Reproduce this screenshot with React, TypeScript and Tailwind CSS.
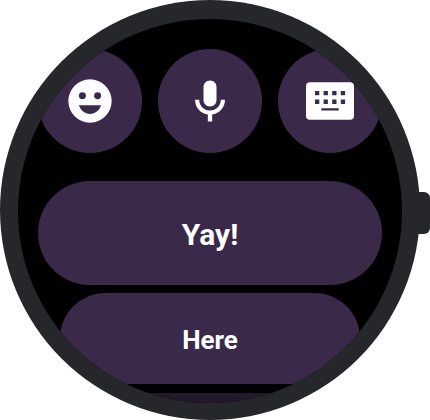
import type { ReactNode } from "react";

function SmileIcon() {
  return (
    <svg viewBox="0 0 24 24" className="size-13" fill="currentColor" aria-hidden="true">
      <path
        fillRule="evenodd"
        d="M12 2a10 10 0 1 0 0 20 10 10 0 0 0 0-20zM8.5 8a1.6 1.6 0 1 1 0 3.2 1.6 1.6 0 0 1 0-3.2zm7 0a1.6 1.6 0 1 1 0 3.2 1.6 1.6 0 0 1 0-3.2zM12 18c2.33 0 4.4-1.7 5.11-4H6.89c.71 2.3 2.78 4 5.11 4z"
      />
    </svg>
  );
}

function MicIcon() {
  return (
    <svg viewBox="0 0 24 24" className="size-13" fill="currentColor" aria-hidden="true">
      <path d="M12 14.5c1.66 0 3-1.34 3-3V5.5c0-1.66-1.34-3-3-3s-3 1.34-3 3v6c0 1.66 1.34 3 3 3z" />
      <path d="M17 11.4c0 2.76-2.24 5-5 5s-5-2.24-5-5H5.1c0 3.53 2.51 6.33 5.9 6.82v3.28h2v-3.28c3.39-.49 5.9-3.29 5.9-6.82H17z" />
    </svg>
  );
}

function KeyboardIcon() {
  return (
    <svg viewBox="0 0 52 52" className="size-13" fill="currentColor" aria-hidden="true">
      <path
        fillRule="evenodd"
        d="M6 7.3h40a4 4 0 0 1 4 4v29.4a4 4 0 0 1-4 4H6a4 4 0 0 1-4-4V11.3a4 4 0 0 1 4-4zM11 16v4.3h4.3V16zM19.6 16v4.3h4.3V16zM28.2 16v4.3h4.3V16zM36.8 16v4.3h4.3V16zM11 24.6v4.3h4.3v-4.3zM19.6 24.6v4.3h4.3v-4.3zM28.2 24.6v4.3h4.3v-4.3zM36.8 24.6v4.3h4.3v-4.3zM17.3 33.3v2.2h17.4v-2.2z"
      />
    </svg>
  );
}

function RoundButton({ label, children }: { label: string; children: ReactNode }) {
  return (
    <button
      type="button"
      aria-label={label}
      className="flex aspect-square flex-1 items-center justify-center rounded-full bg-[#3b294a] text-white"
    >
      {children}
    </button>
  );
}

export default function App() {
  return (
    <main className="flex items-center bg-white font-['Roboto',sans-serif]">
      <div className="aspect-square min-w-0 flex-1 rounded-full bg-[#25272a] px-[18px] pt-[19px] pb-[17px]">
        <div className="flex aspect-square w-full flex-col overflow-hidden rounded-full bg-black px-5 pt-[30px]">
          <div className="flex shrink-0 gap-4">
            <RoundButton label="Emoji">
              <SmileIcon />
            </RoundButton>
            <RoundButton label="Voice input">
              <MicIcon />
            </RoundButton>
            <RoundButton label="Keyboard">
              <KeyboardIcon />
            </RoundButton>
          </div>
          <button
            type="button"
            className="mt-7 h-26 shrink-0 rounded-full bg-[#3b294a] pt-0.5 text-[30px] font-bold text-white"
          >
            Yay!
          </button>
          <button
            type="button"
            className="mx-[22px] mt-2 h-[91px] shrink-0 rounded-full bg-[#3b294a] pt-1 text-[26px] font-bold text-white"
          >
            Here
          </button>
          <button
            type="button"
            aria-label="More replies"
            className="mx-11 mt-[9px] h-20 shrink-0 rounded-3xl bg-[#23192b]"
          />
        </div>
      </div>
      <div className="mt-1.5 -ml-1 h-[42px] w-3.5 shrink-0 rounded-r-md bg-[#25272a]" />
    </main>
  );
}
